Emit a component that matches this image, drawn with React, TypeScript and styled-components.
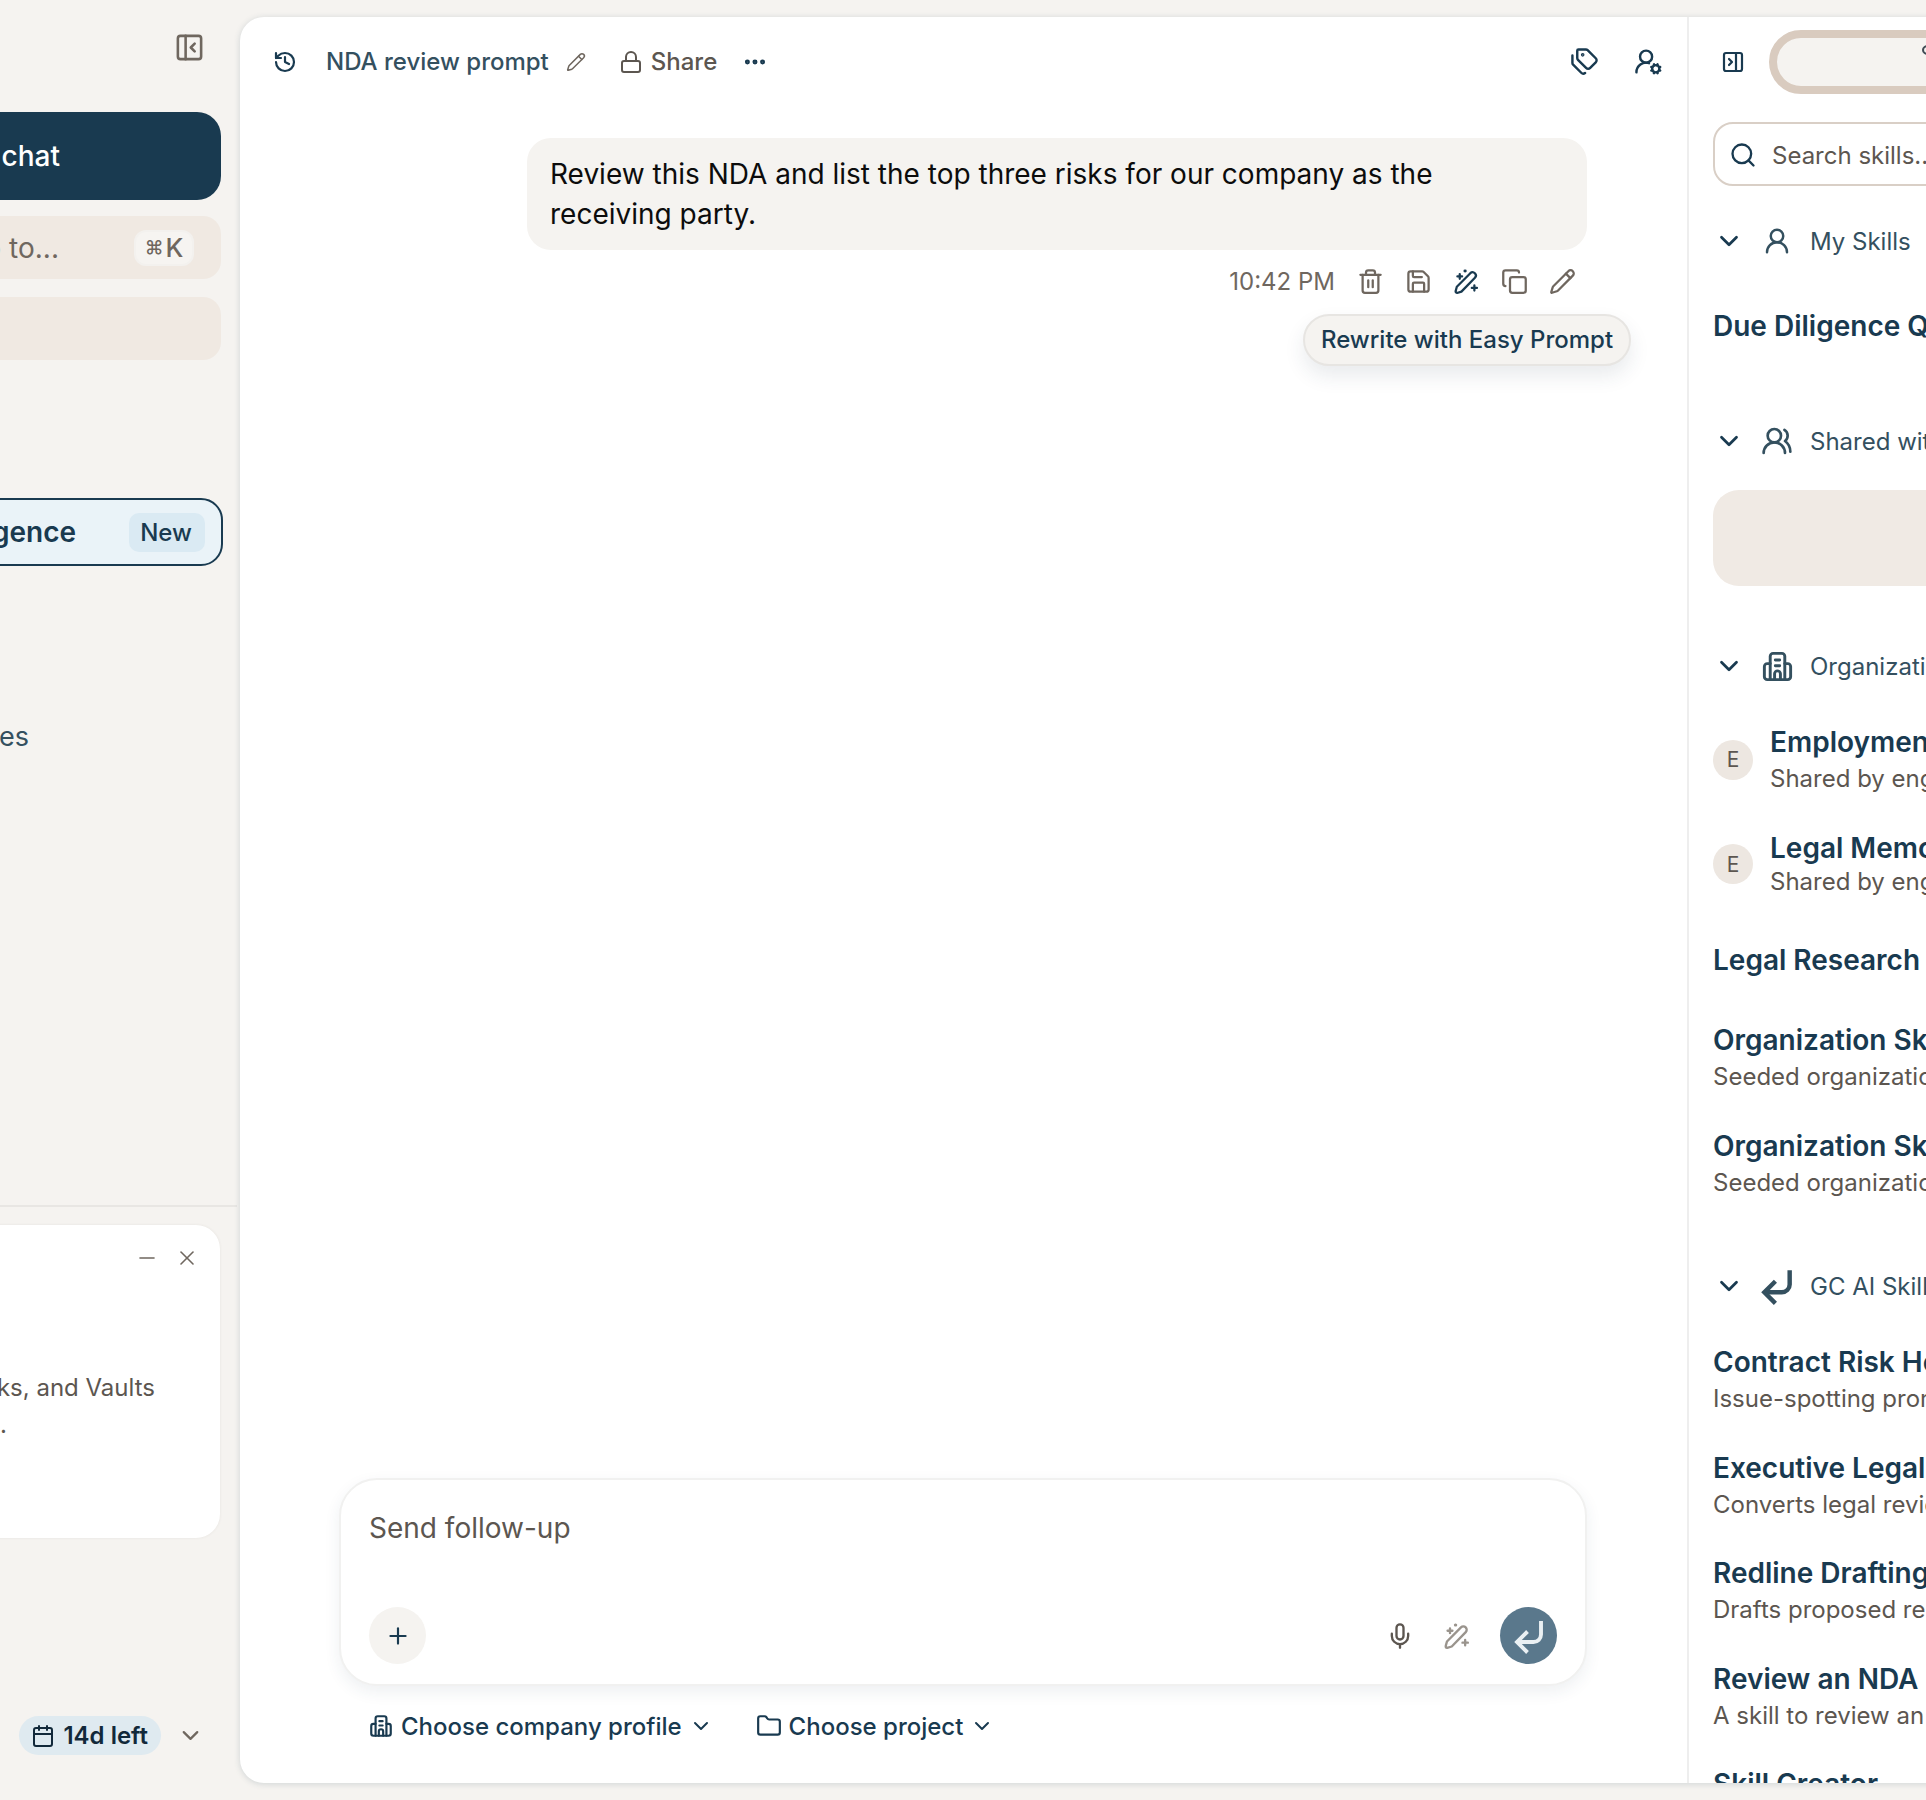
import React from "react";
import styled, { createGlobalStyle } from "styled-components";
import {
  PanelLeftClose, PanelRightClose, History, Pencil, Lock, Ellipsis, Tags, UserRoundCog,
  Trash2, Save, Copy, Plus, Minus, X, Calendar, ChevronDown, Folder, Search, UserRound,
  UsersRound, Mic,
} from "lucide-react";

const navy = "#193a50";
const slate = "#34505f";
const stone = "#5c5650";
const taupe = "#6f675f";

const Global = createGlobalStyle`
  html, body { margin: 0; padding: 0; background: #f5f3f0; overflow: hidden; }
  * { box-sizing: border-box; }
  body { font-family: Inter, "Noto Sans", "Liberation Sans", sans-serif; }
`;

const Frame = styled.div`
  display: flex;
  width: 1926px;
  height: 1800px;
  overflow: hidden;
  background: #f5f3f0;
`;

/* ---------- sidebar ---------- */
const Sidebar = styled.aside`
  flex: none;
  width: 400px;
  height: 1800px;
  margin-left: -160px;
  display: flex;
  flex-direction: column;
`;
const SidebarHeader = styled.div`
  height: 112px;
  padding: 32px 35px 0 0;
  display: flex;
  justify-content: flex-end;
  align-items: flex-start;
  color: ${taupe};
`;
const NavStack = styled.nav`
  display: flex;
  flex-direction: column;
  padding-right: 19px;
`;
const NewChat = styled.div`
  height: 88px;
  border-radius: 24px;
  background: ${navy};
  color: #fff;
  display: flex;
  align-items: center;
  justify-content: flex-end;
  padding-right: 161px;
  font-size: 28px;
  font-weight: 500;
`;
const NavTile = styled.div<{ $top: number }>`
  height: 63px;
  margin-top: ${(p) => p.$top}px;
  border-radius: 18px;
  background: #f0e9e2;
  color: ${taupe};
  display: flex;
  align-items: center;
  justify-content: flex-end;
  padding-right: 27px;
  gap: 75px;
  font-size: 28px;
`;
const Kbd = styled.span`
  width: 60px;
  height: 36px;
  border-radius: 12px;
  background: #f6f4f1;
  border: 2px solid #f3f1ee;
  display: flex;
  align-items: center;
  justify-content: center;
  gap: 2px;
  font-size: 26px;
  color: ${taupe};
  font-weight: 500;
`;
const KbdSymbol = styled.span`
  font-size: 19px;
`;
const FeatureRow = styled.div`
  height: 68px;
  margin: 138px -2px 0 0;
  border: 2px solid ${navy};
  border-radius: 22px;
  background: #eaf3f8;
  color: ${navy};
  display: flex;
  align-items: center;
  justify-content: flex-end;
  gap: 53px;
  padding-right: 16px;
  font-size: 28px;
  font-weight: 600;
`;
const NewBadge = styled.span`
  width: 76px;
  height: 39px;
  padding-right: 2px;
  border-radius: 10px;
  background: #daeaf3;
  display: flex;
  align-items: center;
  justify-content: center;
  font-size: 24px;
  font-weight: 500;
`;
const NavLink = styled.div`
  height: 63px;
  margin-top: 139px;
  padding-right: 192px;
  display: flex;
  align-items: center;
  justify-content: flex-end;
  font-size: 27px;
  font-weight: 400;
  color: ${slate};
`;
const SidebarFooter = styled.div`
  margin-top: auto;
  padding-bottom: 45px;
  display: flex;
  flex-direction: column;
`;
const Divider = styled.div`
  height: 2px;
  margin-right: 3px;
  background: #e8e6e3;
`;
const Notice = styled.div`
  height: 313px;
  margin: 18px 20px 0 0;
  border-radius: 24px;
  background: #fff;
  box-shadow: 0 0 3px rgba(60, 50, 40, 0.08);
  padding-top: 21px;
`;
const NoticeActions = styled.div`
  display: flex;
  justify-content: flex-end;
  gap: 16px;
  padding-right: 21px;
  color: ${taupe};
`;
const NoticeBody = styled.div`
  margin-top: 99px;
  font-size: 24px;
  line-height: 37px;
  color: ${stone};
`;
const NoticeLine = styled.div<{ $inset: number }>`
  text-align: right;
  padding-right: ${(p) => p.$inset}px;
  white-space: nowrap;
`;
const TrialRow = styled.div`
  margin-top: 178px;
  padding-right: 36px;
  display: flex;
  align-items: center;
  justify-content: flex-end;
  gap: 16px;
  color: ${taupe};
`;
const TrialPill = styled.div`
  height: 39px;
  padding: 0 13px 0 12px;
  border-radius: 20px;
  background: #dfeaf0;
  color: #12293a;
  display: flex;
  align-items: center;
  gap: 8px;
  font-size: 24px;
  font-weight: 600;
`;

/* ---------- main panel ---------- */
const Panel = styled.main`
  flex: none;
  width: 2000px;
  height: 1766px;
  margin-top: 17px;
  border-radius: 24px 0 0 24px;
  background: #fff;
  box-shadow: 0 1px 6px rgba(40, 70, 90, 0.18);
  display: flex;
  overflow: hidden;
`;
const ChatColumn = styled.section`
  position: relative;
  flex: none;
  width: 1447px;
  display: flex;
  flex-direction: column;
`;
const TopBar = styled.header`
  height: 89px;
  padding: 0 24px 0 33px;
  display: flex;
  align-items: center;
  color: ${slate};
`;
const ChatTitle = styled.span`
  margin-left: 29px;
  font-size: 24px;
  font-weight: 500;
  color: ${slate};
`;
const TitleEdit = styled.span`
  margin-left: 17px;
  display: flex;
  color: ${taupe};
`;
const ShareButton = styled.span`
  margin-left: 33px;
  display: flex;
  align-items: center;
  gap: 8px;
  font-size: 24px;
  font-weight: 500;
  color: ${stone};
`;
const MoreButton = styled.span`
  margin-left: 25px;
  display: flex;
  color: ${navy};
`;
const TopActions = styled.div`
  margin-left: auto;
  display: flex;
  align-items: center;
  gap: 35px;
  color: ${navy};
`;
const Bubble = styled.div`
  align-self: flex-end;
  width: 1060px;
  margin: 32px 100px 0 0;
  padding: 16px 40px 16px 23px;
  border-radius: 24px;
  background: #f5f3f0;
  font-size: 28px;
  line-height: 40px;
  color: #0c0c0c;
`;
const MessageMeta = styled.div`
  margin-top: 17px;
  padding-right: 111px;
  display: flex;
  justify-content: flex-end;
  align-items: center;
  gap: 21px;
  color: ${taupe};
`;
const MetaTime = styled.span`
  margin-right: 1px;
  font-size: 24px;
  color: ${taupe};
`;
const MetaAccent = styled.span`
  display: flex;
  color: ${navy};
`;
const Tip = styled.div`
  position: absolute;
  left: 1063px;
  top: 297px;
  width: 328px;
  height: 52px;
  padding-bottom: 2px;
  border: 2px solid #e7e5e2;
  border-radius: 26px;
  background: #f5f3f0;
  box-shadow: 0 10px 20px rgba(40, 60, 80, 0.1);
  display: flex;
  align-items: center;
  justify-content: center;
  font-size: 24px;
  font-weight: 500;
  color: ${navy};
  white-space: nowrap;
`;
const Composer = styled.div`
  width: 1248px;
  height: 208px;
  margin: auto 0 0 99px;
  padding: 30px 28px 20px;
  border-radius: 38px;
  border: 2px solid #f1f1f0;
  background: #fff;
  box-shadow: 0 6px 16px rgba(40, 70, 90, 0.08);
  display: flex;
  flex-direction: column;
  justify-content: space-between;
`;
const Placeholder = styled.div`
  font-size: 28px;
  line-height: 36px;
  color: ${stone};
`;
const ComposerTools = styled.div`
  display: flex;
  align-items: center;
  justify-content: space-between;
`;
const RoundButton = styled.span<{ $bg: string; $fg: string }>`
  width: 57px;
  height: 57px;
  border-radius: 50%;
  background: ${(p) => p.$bg};
  color: ${(p) => p.$fg};
  display: flex;
  align-items: center;
  justify-content: center;
`;
const ToolGroup = styled.div`
  display: flex;
  align-items: center;
  gap: 29px;
  color: ${stone};
`;
const FadedTool = styled.span`
  display: flex;
  color: #9a948d;
`;
const ContextRow = styled.div`
  height: 40px;
  margin: 20px 0 37px;
  padding-left: 128px;
  display: flex;
  align-items: center;
  color: ${navy};
`;
const ContextPick = styled.span`
  display: flex;
  align-items: center;
  gap: 7px;
  margin-right: 43px;
  font-size: 24px;
  font-weight: 500;
  color: ${navy};
`;

/* ---------- skills panel ---------- */
const SkillsPanel = styled.aside`
  flex: none;
  width: 553px;
  padding-left: 24px;
  border-left: 2px solid #eeeeee;
  overflow: hidden;
  white-space: nowrap;
`;
const SkillsTop = styled.div`
  padding-top: 13px;
  display: flex;
  align-items: center;
  gap: 24px;
  color: ${navy};
`;
const ToggleIcon = styled.span`
  display: flex;
  margin-left: 8px;
`;
const Segments = styled.div`
  width: 500px;
  height: 64px;
  padding: 7px 0 0 145px;
  border: 8px solid #d9cbbf;
  border-radius: 32px;
  background: #f5f3f0;
`;
const SegmentMark = styled.span`
  display: block;
  width: 12px;
  height: 10px;
  border: 2.5px solid #3f4b54;
  border-radius: 50%;
`;
const SearchBox = styled.div`
  width: 500px;
  height: 64px;
  margin-top: 28px;
  padding: 2px 0 0 14px;
  border: 2px solid #d9cfc6;
  border-radius: 20px;
  display: flex;
  align-items: center;
  gap: 15px;
  font-size: 24px;
  color: ${stone};
`;
const SectionHead = styled.div<{ $top: number }>`
  height: 40px;
  margin-top: ${(p) => p.$top}px;
  margin-left: 1px;
  display: flex;
  align-items: center;
  gap: 19px;
  font-size: 24px;
  color: ${slate};
`;
const SectionIcon = styled.span`
  flex: none;
  width: 28px;
  display: flex;
  justify-content: center;
  color: ${slate};
  & > svg {
    flex: none;
  }
`;
const EmptyShared = styled.div`
  width: 500px;
  height: 96px;
  margin-top: 29px;
  border-radius: 26px;
  background: #f0eae4;
`;
const SkillRow = styled.div<{ $top: number }>`
  margin-top: ${(p) => p.$top}px;
  display: flex;
  align-items: center;
  gap: 17px;
`;
const Avatar = styled.span`
  flex: none;
  width: 40px;
  height: 40px;
  border-radius: 50%;
  background: #ede7e1;
  color: ${stone};
  display: flex;
  align-items: center;
  justify-content: center;
  font-size: 21px;
`;
const SkillTitle = styled.div`
  padding-top: 1px;
  font-size: 28px;
  line-height: 38px;
  font-weight: 600;
  color: ${navy};
`;
const SkillSub = styled.div<{ $tight?: boolean }>`
  margin-top: ${(p) => (p.$tight ? -3 : 0)}px;
  font-size: 24px;
  line-height: 36px;
  color: ${stone};
`;

/* ---------- drawn icons ---------- */
const PenSpark = ({ size = 26 }: { size?: number }) => (
  <svg width={size} height={size} viewBox="0 0 24 24" fill="none" stroke="currentColor" strokeWidth="2" strokeLinecap="round" strokeLinejoin="round">
    <path d="M3.6 22.2c-.9-.2-1.4-1-1.2-1.9l1-3.6L15.4 4.6a2.9 2.9 0 0 1 4.1 4.1L7.5 21z" />
    <path d="M6 5.4v4.2M3.9 7.5h4.2M19 15.4v4.6M16.7 17.7h4.6" />
    <path d="M10.6 2.6h.3" strokeWidth="2.6" />
  </svg>
);
const BuildingWings = ({ size = 26 }: { size?: number }) => (
  <svg width={size} height={size} viewBox="0 0 24 24" fill="none" stroke="currentColor" strokeWidth="2" strokeLinecap="round" strokeLinejoin="round">
    <path d="M7 21V5a2 2 0 0 1 2-2h6a2 2 0 0 1 2 2v16" />
    <path d="M7 10H5a2 2 0 0 0-2 2v7a2 2 0 0 0 2 2h14a2 2 0 0 0 2-2v-7a2 2 0 0 0-2-2h-2" />
    <path d="M10.5 7.5h3M10.5 11.5h3M10 21v-4a2 2 0 0 1 4 0v4" />
  </svg>
);
const ReturnMark = ({ size = 30, weight = 3 }: { size?: number; weight?: number }) => (
  <svg width={size} height={size} viewBox="0 0 24 24" fill="none" stroke="currentColor" strokeWidth={weight} strokeLinecap="butt" strokeLinejoin="miter">
    <path d="M20 2v9a5 5 0 0 1-5 5H4" />
    <path d="M11 9l-7 7 7 7" />
  </svg>
);

const Skill = ({ title, sub, top, initial, tight }: { title: string; sub?: string; top: number; initial?: string; tight?: boolean }) => (
  <SkillRow $top={top}>
    {initial && <Avatar>{initial}</Avatar>}
    <div>
      <SkillTitle>{title}</SkillTitle>
      {sub && <SkillSub $tight={tight}>{sub}</SkillSub>}
    </div>
  </SkillRow>
);

const Section = ({ top, icon, label }: { top: number; icon: React.ReactNode; label: string }) => (
  <SectionHead $top={top}>
    <ChevronDown size={30} strokeWidth={2.2} color={navy} />
    <SectionIcon>{icon}</SectionIcon>
    {label}
  </SectionHead>
);

export default function App() {
  return (
    <Frame>
      <Global />
      <Sidebar>
        <SidebarHeader>
          <PanelLeftClose size={31} strokeWidth={2} />
        </SidebarHeader>
        <NavStack>
          <NewChat>New chat</NewChat>
          <NavTile $top={16}>
            Jump to...
            <Kbd>
              <KbdSymbol>⌘</KbdSymbol>K
            </Kbd>
          </NavTile>
          <NavTile $top={18} />
          <FeatureRow>
            Intelligence
            <NewBadge>New</NewBadge>
          </FeatureRow>
          <NavLink>Templates</NavLink>
        </NavStack>
        <SidebarFooter>
          <Divider />
          <Notice>
            <NoticeActions>
              <Minus size={24} strokeWidth={1.6} />
              <X size={24} strokeWidth={1.6} />
            </NoticeActions>
            <NoticeBody>
              <NoticeLine $inset={65}>Playbooks, and Vaults</NoticeLine>
              <NoticeLine $inset={213}>to get started.</NoticeLine>
            </NoticeBody>
          </Notice>
          <TrialRow>
            <TrialPill>
              <Calendar size={24} strokeWidth={2} />
              14d left
            </TrialPill>
            <ChevronDown size={27} strokeWidth={2} />
          </TrialRow>
        </SidebarFooter>
      </Sidebar>

      <Panel>
        <ChatColumn>
          <TopBar>
            <History size={24} strokeWidth={2.2} color={navy} />
            <ChatTitle>NDA review prompt</ChatTitle>
            <TitleEdit>
              <Pencil size={20} strokeWidth={1.8} />
            </TitleEdit>
            <ShareButton>
              <Lock size={24} strokeWidth={2} />
              Share
            </ShareButton>
            <MoreButton>
              <Ellipsis size={26} strokeWidth={2.6} />
            </MoreButton>
            <TopActions>
              <Tags size={29} strokeWidth={2} />
              <UserRoundCog size={29} strokeWidth={2} />
            </TopActions>
          </TopBar>
          <Bubble>Review this NDA and list the top three risks for our company as the receiving party.</Bubble>
          <MessageMeta>
            <MetaTime>10:42 PM</MetaTime>
            <Trash2 size={27} strokeWidth={2} />
            <Save size={27} strokeWidth={2} />
            <MetaAccent>
              <PenSpark size={27} />
            </MetaAccent>
            <Copy size={27} strokeWidth={2} />
            <Pencil size={27} strokeWidth={2} />
          </MessageMeta>
          <Tip>Rewrite with Easy Prompt</Tip>
          <Composer>
            <Placeholder>Send follow-up</Placeholder>
            <ComposerTools>
              <RoundButton $bg="#f5f3f0" $fg={navy}>
                <Plus size={26} strokeWidth={2} />
              </RoundButton>
              <ToolGroup>
                <Mic size={28} strokeWidth={2} />
                <FadedTool>
                  <PenSpark size={28} />
                </FadedTool>
                <RoundButton $bg="#5a788c" $fg="#eaf0f3">
                  <ReturnMark size={36} weight={2.6} />
                </RoundButton>
              </ToolGroup>
            </ComposerTools>
          </Composer>
          <ContextRow>
            <ContextPick>
              <BuildingWings size={26} />
              Choose company profile
              <ChevronDown size={24} strokeWidth={2} />
            </ContextPick>
            <ContextPick>
              <Folder size={26} strokeWidth={2} />
              Choose project
              <ChevronDown size={24} strokeWidth={2} />
            </ContextPick>
          </ContextRow>
        </ChatColumn>

        <SkillsPanel>
          <SkillsTop>
            <ToggleIcon>
              <PanelRightClose size={24} strokeWidth={2.2} />
            </ToggleIcon>
            <Segments>
              <SegmentMark />
            </Segments>
          </SkillsTop>
          <SearchBox>
            <Search size={28} strokeWidth={2} color={navy} />
            Search skills...
          </SearchBox>
          <Section top={35} icon={<UserRound size={30} strokeWidth={2} />} label="My Skills" />
          <Skill top={45} title="Due Diligence Questionnaire" />
          <Section top={76} icon={<UsersRound size={32} strokeWidth={2} />} label="Shared with me" />
          <EmptyShared />
          <Section top={60} icon={<BuildingWings size={35} />} label="Organization" />
          <Skill top={36} initial="E" title="Employment Agreement" sub="Shared by engineering" />
          <Skill top={31} initial="E" title="Legal Memo" sub="Shared by engineering" tight />
          <Skill top={40} title="Legal Research" />
          <Skill top={41} title="Organization Skill" sub="Seeded organization skill" />
          <Skill top={31} title="Organization Skill" sub="Seeded organization skill" />
          <Section top={65} icon={<ReturnMark size={38} weight={2.8} />} label="GC AI Skills" />
          <Skill top={36} title="Contract Risk Heatmap" sub="Issue-spotting prompt" />
          <Skill top={30.5} title="Executive Legal Summary" sub="Converts legal review" />
          <Skill top={30.5} title="Redline Drafting" sub="Drafts proposed redlines" />
          <Skill top={30.5} title="Review an NDA" sub="A skill to review an NDA" />
          <Skill top={30.5} title="Skill Creator" />
        </SkillsPanel>
      </Panel>
    </Frame>
  );
}
